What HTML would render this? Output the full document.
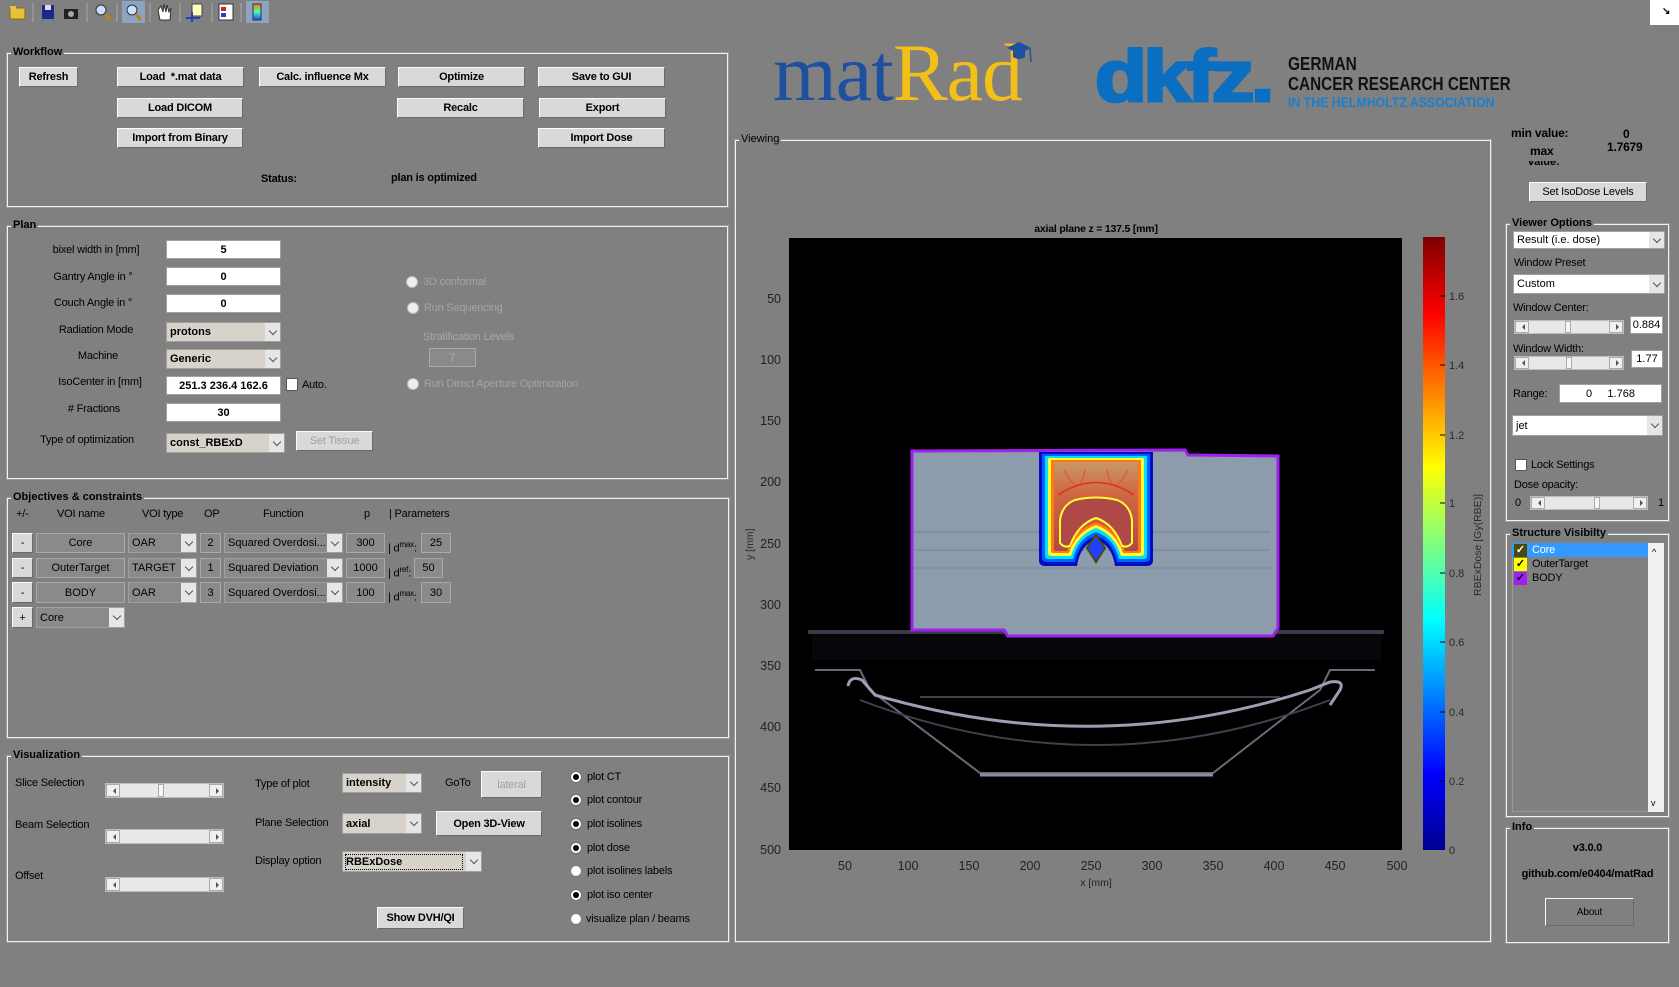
<!DOCTYPE html>
<html><head><meta charset="utf-8"><style>
*{margin:0;padding:0;box-sizing:border-box}
body{width:1679px;height:987px;background:#808080;position:relative;overflow:hidden;font-family:"Liberation Sans",Arial,sans-serif;font-size:11px;color:#000}
.a{position:absolute;white-space:nowrap}
.t{position:absolute;white-space:nowrap;font-size:11px;letter-spacing:-0.2px;line-height:13px}
.c{text-align:center}
.btn{position:absolute;background:#d9d9d9;border:1px solid;border-color:#fafafa #6a6a6a #6a6a6a #fafafa;font-weight:bold;font-size:11px;display:flex;align-items:center;justify-content:center;letter-spacing:-0.2px}
.dis{color:#a0a0a0;font-weight:normal}
.ed{position:absolute;background:#fff;border:1px solid #a0a0a0;display:flex;align-items:center;justify-content:center;font-size:11px;font-weight:bold}
.ed2{position:absolute;background:#8a8a8a;border:1px solid #a8a8a8;display:flex;align-items:center;justify-content:center;font-size:11px}
.pop{position:absolute;background:#d7d3cb;border:1px solid #a0a0a0;font-size:11px;font-weight:bold;padding-left:3px;display:flex;align-items:center}
.pop.w{background:#fff;font-weight:normal}
.pop.g{background:#8a8a8a;font-weight:normal}
.pop i{position:absolute;right:0;top:0;bottom:0;width:15px;background:#e6e6e6;display:flex;align-items:center;justify-content:center}
.pop i:after{content:"";width:5px;height:5px;border-right:1px solid #555;border-bottom:1px solid #555;transform:rotate(45deg);margin-top:-3px}
.pnl{position:absolute;border:1px solid #f2f2f2;outline:1px solid #9a9a9a}
.pnl>b{position:absolute;left:3px;top:-8px;background:#808080;padding:0 2px;font-size:11px;line-height:13px}
.rad{position:absolute;width:12px;height:12px;border-radius:50%;background:#fff;border:1px solid #777}
.rad.on:after{content:"";position:absolute;left:2px;top:2px;width:6px;height:6px;border-radius:50%;background:#000}
.rad.d{background:#eee;border-color:#bbb}
.sl{position:absolute;background:#e8e8e8;border:1px solid #bdbdbd}
.sl .l,.sl .r{position:absolute;top:0;bottom:0;width:14px;background:#f0f0f0;border:1px solid #aaa}
.sl .l{left:0}.sl .r{right:0}
.sl .l:after,.sl .r:after{content:"";position:absolute;top:50%;margin-top:-3px;border:3px solid transparent}
.sl .l:after{left:3px;border-right-color:#555}
.sl .r:after{left:6px;border-left-color:#555}
.sl .th{position:absolute;top:0;bottom:0;width:6px;background:#f6f6f6;border:1px solid #aaa}
.chk{position:absolute;width:12px;height:12px;background:#fff;border:1px solid #555}
</style></head><body>

<!-- toolbar -->
<svg class="a" style="left:0;top:0" width="280" height="25">
<rect x="10" y="8" width="15" height="11" fill="#e8c040" stroke="#8a6a10"/><rect x="10" y="6" width="6" height="3" fill="#e8c040"/>
<line x1="33" y1="3" x2="33" y2="22" stroke="#a8a8a8"/>
<rect x="42" y="5" width="12" height="14" fill="#1a2a8a"/><rect x="45" y="5" width="6" height="5" fill="#ddd"/>
<rect x="64" y="9" width="14" height="10" fill="#222"/><circle cx="71" cy="14" r="3" fill="#aaa"/>
<line x1="87" y1="3" x2="87" y2="22" stroke="#a8a8a8"/>
<circle cx="101" cy="10" r="5" fill="#c8e0ff" stroke="#333"/><line x1="105" y1="14" x2="110" y2="20" stroke="#c08020" stroke-width="3"/>
<line x1="117" y1="3" x2="117" y2="22" stroke="#a8a8a8"/>
<rect x="122" y="1" width="23" height="22" fill="#8da4c0"/>
<circle cx="132" cy="10" r="5" fill="#c8e0ff" stroke="#333"/><line x1="136" y1="14" x2="141" y2="20" stroke="#c08020" stroke-width="3"/>
<line x1="150" y1="3" x2="150" y2="22" stroke="#a8a8a8"/>
<path d="M160 20 L158 10 L161 6 L163 12 L164 4 L166 12 L167 5 L169 12 L171 8 L170 20Z" fill="#fff" stroke="#333"/>
<line x1="180" y1="3" x2="180" y2="22" stroke="#a8a8a8"/>
<rect x="192" y="4" width="10" height="12" fill="#ffffc0" stroke="#444"/><line x1="186" y1="18" x2="200" y2="18" stroke="#2040c0" stroke-width="2"/><line x1="192" y1="12" x2="192" y2="22" stroke="#2040c0" stroke-width="2"/>
<line x1="212" y1="3" x2="212" y2="22" stroke="#a8a8a8"/>
<rect x="219" y="4" width="14" height="16" fill="#fff" stroke="#333"/><rect x="221" y="7" width="5" height="4" fill="#d02020"/><rect x="221" y="13" width="5" height="4" fill="#2040d0"/>
<line x1="241" y1="3" x2="241" y2="22" stroke="#a8a8a8"/>
<rect x="246" y="1" width="23" height="22" fill="#8da4c0"/>
<defs><linearGradient id="tb" x1="0" y1="1" x2="0" y2="0"><stop offset="0" stop-color="#2040ff"/><stop offset=".5" stop-color="#40ffc0"/><stop offset="1" stop-color="#ff8000"/></linearGradient></defs>
<rect x="253" y="4" width="8" height="16" fill="url(#tb)" stroke="#333"/>
</svg>
<div class="a" style="left:1650px;top:0;width:29px;height:25px;background:#fff"></div>
<div class="a" style="left:1662px;top:6px;font-size:10px;font-weight:bold">↘</div>

<!-- Workflow -->
<div class="pnl" style="left:7px;top:53px;width:721px;height:154px"><b>Workflow</b></div>
<div class="btn" style="left:19px;top:67px;width:59px;height:20px">Refresh</div>
<div class="btn" style="left:117px;top:67px;width:127px;height:20px">Load &nbsp;*.mat data</div>
<div class="btn" style="left:259px;top:67px;width:127px;height:20px">Calc. influence Mx</div>
<div class="btn" style="left:398px;top:67px;width:127px;height:20px">Optimize</div>
<div class="btn" style="left:538px;top:67px;width:127px;height:20px">Save to GUI</div>
<div class="btn" style="left:117px;top:98px;width:126px;height:20px">Load DICOM</div>
<div class="btn" style="left:397px;top:98px;width:127px;height:20px">Recalc</div>
<div class="btn" style="left:539px;top:98px;width:127px;height:20px">Export</div>
<div class="btn" style="left:117px;top:128px;width:126px;height:20px">Import from Binary</div>
<div class="btn" style="left:538px;top:128px;width:127px;height:20px">Import Dose</div>
<div class="t" style="left:261px;top:173px;font-weight:bold">Status:</div>
<div class="t" style="left:391px;top:172px;font-weight:bold">plan is optimized</div>

<!-- Plan -->
<div class="pnl" style="left:7px;top:226px;width:721px;height:253px"><b>Plan</b></div>
<div class="t c" style="left:26px;width:140px;top:244px">bixel width in [mm]</div>
<div class="t c" style="left:26px;width:134px;top:271px">Gantry Angle in °</div>
<div class="t c" style="left:26px;width:134px;top:297px">Couch Angle in °</div>
<div class="t c" style="left:26px;width:140px;top:324px">Radiation Mode</div>
<div class="t c" style="left:26px;width:144px;top:350px">Machine</div>
<div class="t c" style="left:26px;width:148px;top:376px">IsoCenter in [mm]</div>
<div class="t c" style="left:26px;width:136px;top:403px">#&nbsp;Fractions</div>
<div class="t c" style="left:26px;width:122px;top:434px">Type of optimization</div>
<div class="ed" style="left:166px;top:240px;width:115px;height:19px">5</div>
<div class="ed" style="left:166px;top:267px;width:115px;height:19px">0</div>
<div class="ed" style="left:166px;top:294px;width:115px;height:19px">0</div>
<div class="pop" style="left:166px;top:322px;width:115px;height:20px">protons<i></i></div>
<div class="pop" style="left:166px;top:349px;width:115px;height:20px">Generic<i></i></div>
<div class="ed" style="left:166px;top:376px;width:115px;height:19px">251.3 236.4 162.6</div>
<div class="chk" style="left:286px;top:378px;height:13px"></div>
<div class="t" style="left:302px;top:379px">Auto.</div>
<div class="ed" style="left:166px;top:403px;width:115px;height:19px">30</div>
<div class="pop" style="left:166px;top:433px;width:119px;height:20px">const_RBExD<i></i></div>
<div class="btn dis" style="left:296px;top:431px;width:77px;height:20px">Set Tissue</div>
<div class="rad d" style="left:406px;top:276px"></div><div class="t" style="left:423px;top:276px;color:#a4a4a4">3D conformal</div>
<div class="rad d" style="left:407px;top:302px"></div><div class="t" style="left:424px;top:302px;color:#a4a4a4">Run Sequencing</div>
<div class="t" style="left:423px;top:331px;color:#a8a8a8">Stratification Levels</div>
<div class="ed2" style="left:429px;top:348px;width:47px;height:19px;color:#b0b0b0">7</div>
<div class="rad d" style="left:407px;top:378px"></div><div class="t" style="left:424px;top:378px;color:#a4a4a4">Run Direct Aperture Optimization</div>

<!-- Objectives -->
<div class="pnl" style="left:7px;top:498px;width:722px;height:240px"><b>Objectives &amp; constraints</b></div>
<div class="t" style="left:16px;top:508px">+/-</div>
<div class="t" style="left:57px;top:508px">VOI name</div>
<div class="t" style="left:142px;top:508px">VOI type</div>
<div class="t" style="left:204px;top:508px">OP</div>
<div class="t" style="left:263px;top:508px">Function</div>
<div class="t" style="left:364px;top:508px">p</div>
<div class="t" style="left:389px;top:508px">| Parameters</div>

<div class="btn" style="left:12px;top:533px;width:21px;height:20px;font-weight:normal">-</div>
<div class="ed2" style="left:36px;top:533px;width:89px;height:20px">Core</div>
<div class="pop g" style="left:128px;top:533px;width:69px;height:20px">OAR<i></i></div>
<div class="ed2" style="left:200px;top:533px;width:21px;height:20px">2</div>
<div class="pop g" style="left:224px;top:533px;width:119px;height:20px">Squared Overdosi...<i></i></div>
<div class="ed2" style="left:346px;top:533px;width:39px;height:20px">300</div>
<div class="t" style="left:388px;top:538px">| d<sup style="font-size:8px">max</sup>:</div>
<div class="ed2" style="left:421px;top:533px;width:30px;height:20px">25</div>

<div class="btn" style="left:12px;top:558px;width:21px;height:20px;font-weight:normal">-</div>
<div class="ed2" style="left:36px;top:558px;width:89px;height:20px">OuterTarget</div>
<div class="pop g" style="left:128px;top:558px;width:69px;height:20px">TARGET<i></i></div>
<div class="ed2" style="left:200px;top:558px;width:21px;height:20px">1</div>
<div class="pop g" style="left:224px;top:558px;width:119px;height:20px">Squared Deviation<i></i></div>
<div class="ed2" style="left:346px;top:558px;width:39px;height:20px">1000</div>
<div class="t" style="left:388px;top:563px">| d<sup style="font-size:8px">ref</sup>:</div>
<div class="ed2" style="left:414px;top:558px;width:29px;height:20px">50</div>

<div class="btn" style="left:12px;top:582px;width:21px;height:21px;font-weight:normal">-</div>
<div class="ed2" style="left:36px;top:582px;width:89px;height:21px">BODY</div>
<div class="pop g" style="left:128px;top:582px;width:69px;height:21px">OAR<i></i></div>
<div class="ed2" style="left:200px;top:582px;width:21px;height:21px">3</div>
<div class="pop g" style="left:224px;top:582px;width:119px;height:21px">Squared Overdosi...<i></i></div>
<div class="ed2" style="left:346px;top:582px;width:39px;height:21px">100</div>
<div class="t" style="left:388px;top:587px">| d<sup style="font-size:8px">max</sup>:</div>
<div class="ed2" style="left:421px;top:582px;width:30px;height:21px">30</div>

<div class="btn" style="left:12px;top:607px;width:21px;height:21px;font-weight:normal">+</div>
<div class="pop g" style="left:36px;top:607px;width:89px;height:21px">Core<i></i></div>

<!-- Visualization -->
<div class="pnl" style="left:7px;top:756px;width:722px;height:186px"><b>Visualization</b></div>
<div class="t" style="left:15px;top:777px">Slice Selection</div>
<div class="t" style="left:15px;top:819px">Beam Selection</div>
<div class="t" style="left:15px;top:870px">Offset</div>
<div class="sl" style="left:105px;top:783px;width:119px;height:15px"><div class="l"></div><div class="th" style="left:52px"></div><div class="r"></div></div>
<div class="sl" style="left:105px;top:829px;width:119px;height:15px"><div class="l"></div><div class="r"></div></div>
<div class="sl" style="left:105px;top:877px;width:119px;height:15px"><div class="l"></div><div class="r"></div></div>
<div class="t" style="left:255px;top:778px">Type of plot</div>
<div class="t" style="left:255px;top:817px">Plane Selection</div>
<div class="t" style="left:255px;top:855px">Display option</div>
<div class="t" style="left:445px;top:777px">GoTo</div>
<div class="pop" style="left:342px;top:773px;width:80px;height:20px">intensity<i></i></div>
<div class="pop" style="left:342px;top:813px;width:80px;height:21px">axial<i></i></div>
<div class="pop" style="left:342px;top:851px;width:140px;height:21px"><span style="outline:1px dotted #000;padding:1px 60px 1px 0">RBExDose</span><i></i></div>
<div class="btn dis" style="left:481px;top:771px;width:61px;height:27px">lateral</div>
<div class="btn" style="left:436px;top:811px;width:106px;height:25px">Open 3D-View</div>
<div class="btn" style="left:377px;top:907px;width:87px;height:22px">Show DVH/QI</div>
<div class="rad on" style="left:570px;top:771px"></div><div class="t" style="left:587px;top:771px">plot CT</div>
<div class="rad on" style="left:570px;top:794px"></div><div class="t" style="left:587px;top:794px">plot contour</div>
<div class="rad on" style="left:570px;top:818px"></div><div class="t" style="left:587px;top:818px">plot isolines</div>
<div class="rad on" style="left:570px;top:842px"></div><div class="t" style="left:587px;top:842px">plot dose</div>
<div class="rad" style="left:570px;top:865px"></div><div class="t" style="left:587px;top:865px">plot isolines labels</div>
<div class="rad on" style="left:570px;top:889px"></div><div class="t" style="left:587px;top:889px">plot iso center</div>
<div class="rad" style="left:570px;top:913px"></div><div class="t" style="left:586px;top:913px">visualize plan / beams</div>

<!-- Logos -->
<div class="a" style="left:773px;top:28px;font-family:'Liberation Serif',serif;font-size:82px;line-height:90px;letter-spacing:-1px"><span style="color:#1f4f9f">mat</span><span style="color:#f5bf1a">Rad</span></div>
<svg class="a" style="left:1005px;top:40px" width="30" height="30"><path d="M2 8 L14 2 L26 8 L14 14Z" fill="#1f4f9f"/><path d="M8 11 L8 17 Q14 21 20 17 L20 11 L14 14Z" fill="#1f4f9f"/><line x1="25" y1="8" x2="26" y2="22" stroke="#1f4f9f" stroke-width="1.5"/></svg>
<div class="a" style="left:1095px;top:32px;font-family:'Liberation Sans',sans-serif;font-weight:bold;font-size:72px;line-height:90px;color:#0b6fc1;letter-spacing:-3px;-webkit-text-stroke:3px #0b6fc1;transform:scaleX(1.18);transform-origin:left">dkfz<span style="letter-spacing:0">.</span></div>
<div class="a" style="left:1288px;top:55px;font-weight:bold;font-size:18px;line-height:19px;color:#111;transform:scaleX(0.86);transform-origin:left">GERMAN</div>
<div class="a" style="left:1288px;top:75px;font-weight:bold;font-size:18px;line-height:19px;color:#111;transform:scaleX(0.85);transform-origin:left">CANCER RESEARCH CENTER</div>
<div class="a" style="left:1288px;top:95px;font-weight:bold;font-size:14px;line-height:15px;color:#1a7fd0;transform:scaleX(0.88);transform-origin:left">IN THE HELMHOLTZ ASSOCIATION</div>

<!-- Viewing -->
<div class="pnl" style="left:735px;top:140px;width:756px;height:802px"><b style="font-weight:normal">Viewing</b></div>
<div class="t" style="left:1096px;top:223px;transform:translateX(-50%);font-weight:bold;font-size:10.5px">axial plane z = 137.5 [mm]</div>
<svg class="a" style="left:740px;top:230px" width="760" height="670">
<defs>
<linearGradient id="jet" x1="0" y1="1" x2="0" y2="0">
<stop offset="0" stop-color="#00008f"/><stop offset=".125" stop-color="#0000ff"/><stop offset=".375" stop-color="#00ffff"/><stop offset=".625" stop-color="#ffff00"/><stop offset=".875" stop-color="#ff0000"/><stop offset="1" stop-color="#800000"/></linearGradient>
<linearGradient id="dz" x1="0" y1="0" x2="0" y2="1"><stop offset="0" stop-color="#c89868"/><stop offset=".35" stop-color="#d06840"/><stop offset="1" stop-color="#b04848"/></linearGradient>
</defs>
<g transform="translate(-740,-230)">
<rect x="789" y="238" width="613" height="612" fill="#000"/>
<!-- couch -->
<rect x="808" y="630" width="576" height="4" fill="#3a3a48"/>
<rect x="812" y="634" width="570" height="26" fill="#07070b"/>
<polyline points="815,670 860,670 870,690 980,773 1213,773 1320,690 1330,670 1375,670" fill="none" stroke="#6a6a7a" stroke-width="2"/>
<path d="M848,686 Q850,675 862,680 L875,695 Q1096,760 1310,690 L1330,682 Q1345,680 1340,690 L1330,705" fill="none" stroke="#9aa0b0" stroke-width="3"/>
<path d="M860,700 Q1096,790 1330,700" fill="none" stroke="#404050" stroke-width="2"/>
<line x1="920" y1="697" x2="1280" y2="697" stroke="#404050" stroke-width="2"/>
<line x1="980" y1="775" x2="1213" y2="775" stroke="#8a90a0" stroke-width="3"/>
<!-- body -->
<path d="M912,451 L1185,450 L1188,455 L1278,456 L1278,628 L1273,636 L1008,636 L1004,630 L912,630Z" fill="#8c9cad" stroke="#a020f0" stroke-width="3"/>
<line x1="914" y1="532" x2="1270" y2="532" stroke="#7a8494" stroke-width="2" opacity=".6"/>
<line x1="914" y1="550" x2="1270" y2="550" stroke="#7a8494" stroke-width="2" opacity=".5"/>
<line x1="914" y1="568" x2="1270" y2="568" stroke="#7a8494" stroke-width="2" opacity=".4"/>
<!-- dose -->
<path d="M1039,452 H1153 V560 Q1153,566 1147,566 H1115 Q1112,545 1096,540 Q1080,545 1077,566 H1045 Q1039,566 1039,560Z" fill="#0010c0"/>
<path d="M1042,454 H1150 V558 Q1150,562 1145,562 H1117 Q1113,541 1096,536 Q1079,541 1075,562 H1047 Q1042,562 1042,558Z" fill="#0060ff"/>
<path d="M1045,456 H1147 V556 Q1147,559 1143,559 H1119 Q1114,538 1096,532 Q1078,538 1073,559 H1049 Q1045,559 1045,556Z" fill="#00e0ff"/>
<path d="M1048,458 H1144 V553 Q1144,556 1141,556 H1121 Q1115,535 1096,528 Q1077,535 1071,556 H1051 Q1048,556 1048,553Z" fill="#ffff30"/>
<path d="M1051,460 H1141 V551 Q1141,553 1139,553 H1123 Q1116,532 1096,525 Q1076,532 1069,553 H1053 Q1051,553 1051,551Z" fill="#ff7a10"/>
<path d="M1054,462 H1138 V549 Q1138,551 1136,551 H1125 Q1117,529 1096,522 Q1075,529 1067,551 H1056 Q1054,551 1054,549Z" fill="url(#dz)"/>
<path d="M1060,520 Q1062,505 1075,500 Q1096,495 1117,500 Q1130,505 1132,520 L1132,543 Q1128,548 1122,546 Q1114,524 1096,518 Q1078,524 1070,546 Q1064,548 1060,543Z" fill="#b04848" stroke="#ffff30" stroke-width="2"/>
<path d="M1064,470 Q1080,500 1085,470 M1107,470 Q1112,500 1128,470" fill="none" stroke="#e05030" stroke-width="1.5" opacity=".7"/>
<path d="M1058,495 Q1096,470 1134,495" fill="none" stroke="#e03020" stroke-width="1.5"/>
<path d="M1087,548 L1096,535 L1105,548 L1096,562Z" fill="#2040ff" stroke="#4a4a10" stroke-width="2"/>
<!-- colorbar -->
<rect x="1423" y="237" width="22" height="613" fill="url(#jet)"/>
<g stroke="#000" stroke-width="1">
<line x1="1445" y1="296" x2="1440" y2="296"/><line x1="1445" y1="365" x2="1440" y2="365"/><line x1="1445" y1="435" x2="1440" y2="435"/><line x1="1445" y1="503" x2="1440" y2="503"/><line x1="1445" y1="573" x2="1440" y2="573"/><line x1="1445" y1="642" x2="1440" y2="642"/><line x1="1445" y1="712" x2="1440" y2="712"/><line x1="1445" y1="781" x2="1440" y2="781"/>
</g>
<g font-family="Liberation Sans" font-size="11" fill="#2a2a2a">
<text x="1449" y="300">1.6</text><text x="1449" y="369">1.4</text><text x="1449" y="439">1.2</text><text x="1449" y="507">1</text><text x="1449" y="577">0.8</text><text x="1449" y="646">0.6</text><text x="1449" y="716">0.4</text><text x="1449" y="785">0.2</text><text x="1449" y="854">0</text>
<text transform="translate(1481,596) rotate(-90)" font-size="10.5">RBExDose [Gy(RBE)]</text>
<text transform="translate(753,560) rotate(-90)" font-size="10.5">y [mm]</text>
</g>
<g font-family="Liberation Sans" font-size="12.5" fill="#222" text-anchor="end">
<text x="781" y="303">50</text><text x="781" y="364">100</text><text x="781" y="425">150</text><text x="781" y="486">200</text><text x="781" y="548">250</text><text x="781" y="609">300</text><text x="781" y="670">350</text><text x="781" y="731">400</text><text x="781" y="792">450</text><text x="781" y="854">500</text>
</g>
<g font-family="Liberation Sans" font-size="12.5" fill="#222" text-anchor="middle">
<text x="845" y="870">50</text><text x="908" y="870">100</text><text x="969" y="870">150</text><text x="1030" y="870">200</text><text x="1091" y="870">250</text><text x="1152" y="870">300</text><text x="1213" y="870">350</text><text x="1274" y="870">400</text><text x="1335" y="870">450</text><text x="1397" y="870">500</text>
<text x="1096" y="886" font-size="10.5">x [mm]</text>
</g>
</g>
</svg>

<!-- right side -->
<div class="t" style="left:1511px;top:127px;font-weight:bold;font-size:12px">min value:</div>
<div class="t" style="left:1623px;top:128px;font-weight:bold;font-size:12px">0</div>
<div class="t" style="left:1530px;top:145px;font-weight:bold;font-size:12px">max</div>
<div class="t" style="left:1607px;top:141px;font-weight:bold;font-size:12px">1.7679</div>
<div class="a" style="left:1528px;top:161px;width:38px;height:4px;overflow:hidden;font-size:11px;font-weight:bold;line-height:2px">value:</div>
<div class="btn" style="left:1529px;top:182px;width:118px;height:20px;font-weight:normal">Set IsoDose Levels</div>

<div class="pnl" style="left:1506px;top:224px;width:163px;height:297px"><b>Viewer Options</b></div>
<div class="pop w" style="left:1513px;top:231px;width:152px;height:18px">Result (i.e. dose)<i></i></div>
<div class="t" style="left:1514px;top:257px">Window Preset</div>
<div class="pop w" style="left:1513px;top:274px;width:152px;height:20px">Custom<i></i></div>
<div class="t" style="left:1513px;top:302px">Window Center:</div>
<div class="sl" style="left:1514px;top:320px;width:110px;height:14px"><div class="l"></div><div class="th" style="left:50px"></div><div class="r"></div></div>
<div class="ed" style="left:1630px;top:316px;width:33px;height:18px;font-weight:normal">0.884</div>
<div class="t" style="left:1513px;top:343px">Window Width:</div>
<div class="sl" style="left:1514px;top:356px;width:110px;height:14px"><div class="l"></div><div class="th" style="left:51px"></div><div class="r"></div></div>
<div class="ed" style="left:1631px;top:350px;width:32px;height:18px;font-weight:normal">1.77</div>
<div class="t" style="left:1513px;top:388px">Range:</div>
<div class="ed" style="left:1559px;top:384px;width:103px;height:19px;font-weight:normal">0 &nbsp;&nbsp;&nbsp;&nbsp;1.768</div>
<div class="pop w" style="left:1512px;top:415px;width:151px;height:21px">jet<i></i></div>
<div class="chk" style="left:1515px;top:459px"></div>
<div class="t" style="left:1531px;top:459px">Lock Settings</div>
<div class="t" style="left:1514px;top:479px">Dose opacity:</div>
<div class="t" style="left:1515px;top:497px">0</div>
<div class="sl" style="left:1530px;top:496px;width:118px;height:14px"><div class="l"></div><div class="th" style="left:63px"></div><div class="r"></div></div>
<div class="t" style="left:1658px;top:497px">1</div>

<div class="pnl" style="left:1506px;top:534px;width:163px;height:283px"><b>Structure Visibilty</b></div>
<div class="a" style="left:1512px;top:543px;width:152px;height:269px;background:#808080;border:1px solid #9a9a9a"></div>
<div class="a" style="left:1512px;top:543px;width:136px;height:14px;background:#3399ff"></div>
<div class="a" style="left:1648px;top:543px;width:16px;height:269px;background:#f0f0f0"></div>
<div class="t" style="left:1652px;top:546px;font-size:9px">^</div>
<div class="t" style="left:1651px;top:797px;font-size:9px">v</div>
<div class="a" style="left:1514px;top:544px;width:13px;height:13px;background:#4a4a10;color:#fff;font-size:11px;line-height:13px;text-align:center;font-weight:bold">✓</div>
<div class="t" style="left:1532px;top:544px;color:#fff">Core</div>
<div class="a" style="left:1514px;top:558px;width:13px;height:13px;background:#ffff00;color:#000;font-size:11px;line-height:13px;text-align:center;font-weight:bold">✓</div>
<div class="t" style="left:1532px;top:558px">OuterTarget</div>
<div class="a" style="left:1514px;top:572px;width:13px;height:13px;background:#a020f0;color:#000;font-size:11px;line-height:13px;text-align:center;font-weight:bold">✓</div>
<div class="t" style="left:1532px;top:572px">BODY</div>

<div class="pnl" style="left:1506px;top:828px;width:163px;height:115px"><b>Info</b></div>
<div class="t" style="left:1507px;width:161px;top:842px;text-align:center;font-weight:bold">v3.0.0</div>
<div class="t" style="left:1507px;width:161px;top:868px;text-align:center;font-weight:bold">github.com/e0404/matRad</div>
<div class="btn" style="left:1545px;top:898px;width:89px;height:28px;background:#808080;font-weight:normal;font-size:10px">About</div>
</body></html>
